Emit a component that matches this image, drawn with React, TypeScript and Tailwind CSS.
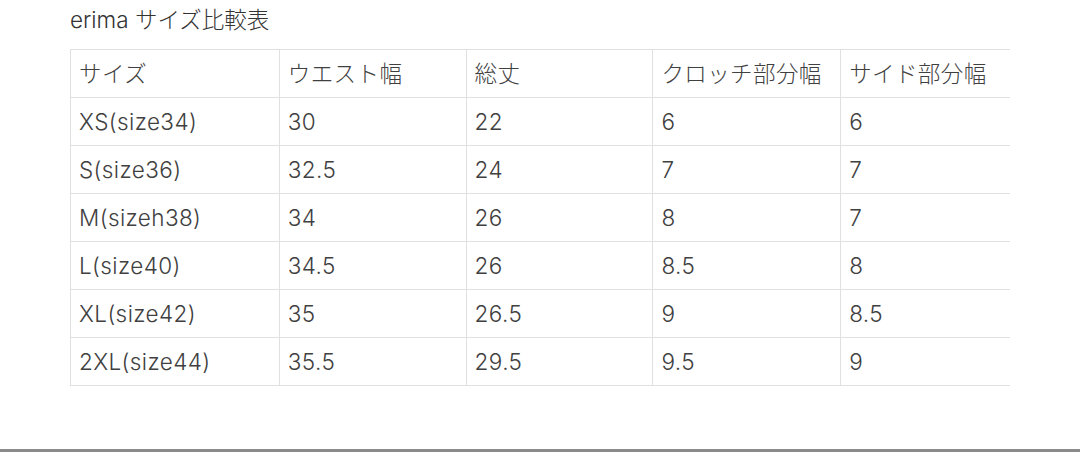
const header = ["サイズ", "ウエスト幅", "総丈", "クロッチ部分幅", "サイド部分幅"]

const rows: string[][] = [
  ["XS(size34)", "30", "22", "6", "6"],
  ["S(size36)", "32.5", "24", "7", "7"],
  ["M(sizeh38)", "34", "26", "8", "7"],
  ["L(size40)", "34.5", "26", "8.5", "8"],
  ["XL(size42)", "35", "26.5", "9", "8.5"],
  ["2XL(size44)", "35.5", "29.5", "9.5", "9"],
]

const colWidths = ["w-[209px]", "w-[187px]", "w-[187px]", "w-[188px]", "w-[169px]"]

function Row({ cells }: { cells: string[] }) {
  return (
    <div className="flex h-[48px] border-b border-[#e0e0e0]">
      {cells.map((c, i) => (
        <div
          key={i}
          className={`${colWidths[i]} flex items-center px-[8px] whitespace-nowrap ${i < cells.length - 1 ? "border-r border-[#e0e0e0]" : ""}`}
        >
          {c}
        </div>
      ))}
    </div>
  )
}

export default function App() {
  return (
    <div
      className="w-[1080px] h-[452px] bg-white flex flex-col text-[#404040]"
      style={{ fontFamily: 'Inter, "Noto Sans CJK JP", sans-serif' }}
    >
      <div className="flex-1 pl-[70px]">
        <div className="h-[49px] pt-[4px] text-[22.5px] leading-[32px] font-light text-[#333]">erima サイズ比較表</div>
        <div className="w-[940px] border-t border-l border-[#e0e0e0] text-[22.5px] font-light tracking-[0.4px]">
          <Row cells={header} />
          {rows.map((r, i) => (
            <Row key={i} cells={r} />
          ))}
        </div>
      </div>
      <div className="h-[3px] bg-[#8a8a8a]" />
    </div>
  )
}
